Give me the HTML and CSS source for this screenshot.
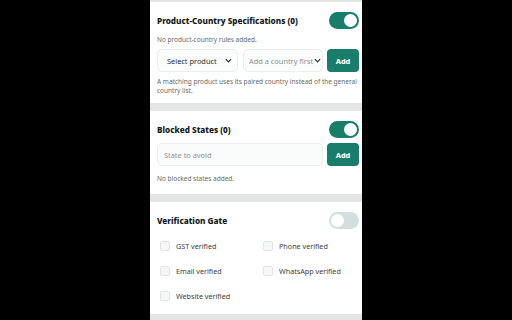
FILE: index.html
```html
<!DOCTYPE html>
<html lang="en">
<head>
    <meta charset="UTF-8">
    <meta name="viewport" content="width=device-width, initial-scale=1.0">
    <title>Store Rules</title>
    <link rel="stylesheet" href="styles.css">
</head>
<body>
    <div class="panel">
        <!-- Product-country pairs -->
        <section class="card card-products">
            <div class="card-head">
                <h3>Product-Country Specifications (0)</h3>
                <span class="toggle on"></span>
            </div>
            <p class="muted note-top">No product-country rules added.</p>
            <div class="field-row">
                <div class="select select-product">
                    <span>Select product</span>
                    <svg class="chevron" viewBox="0 0 8 5"><path d="M1 1l3 3 3-3"/></svg>
                </div>
                <div class="select select-country">
                    <span>Add a country first</span>
                    <svg class="chevron" viewBox="0 0 8 5"><path d="M1 1l3 3 3-3"/></svg>
                </div>
                <button class="btn-add">Add</button>
            </div>
            <p class="muted help">A matching product uses its paired country instead of the general country list.</p>
        </section>

        <!-- Blocked states -->
        <section class="card card-states">
            <div class="card-head">
                <h3>Blocked States (0)</h3>
                <span class="toggle on"></span>
            </div>
            <div class="field-row">
                <input class="text-input" type="text" placeholder="State to avoid">
                <button class="btn-add">Add</button>
            </div>
            <p class="muted note-bottom">No blocked states added.</p>
        </section>

        <!-- Verification -->
        <section class="card card-gate">
            <div class="card-head">
                <h3>Verification Gate</h3>
                <span class="toggle"></span>
            </div>
            <div class="checks">
                <label class="check"><span class="box"></span>GST verified</label>
                <label class="check"><span class="box"></span>Phone verified</label>
                <label class="check"><span class="box"></span>Email verified</label>
                <label class="check"><span class="box"></span>WhatsApp verified</label>
                <label class="check"><span class="box"></span>Website verified</label>
            </div>
        </section>
    </div>
</body>
</html>
```

FILE: styles.css
```css
:root {
    --color-page: #000;
    --color-strip: #e3e6e5; /* gap between cards */
    --color-card: #fff;
    --color-text: #111615;
    --color-muted: #656b6a;
    --color-field: #fafbfb;
    --color-border: #ebeeed;
    --color-primary: #187d6b;
    --color-off: #d3dfdd;
    --font-family: 'Noto Sans', 'Open Sans', sans-serif;
}

* {
    box-sizing: border-box;
    margin: 0;
    padding: 0;
    font-family: var(--font-family);
}

body {
    background: var(--color-page);
    height: 320px;
    overflow: hidden;
}

.panel {
    width: 212px;
    height: 320px;
    margin: 0 auto;
    padding-top: 2px;
    background: var(--color-strip);
    display: flex;
    flex-direction: column;
    gap: 8px;
}

/* Cards */
.card {
    background: var(--color-card);
    padding: 10px 3px 10px 7px;
}

.card-products { height: 101px; padding-bottom: 8px; }
.card-states { height: 83px; }
.card-gate { height: 112px; }

.card-head {
    display: flex;
    align-items: center;
    justify-content: space-between;
    height: 17px;
}

.card-head h3 {
    font-size: 8.2px;
    font-weight: 800;
    color: var(--color-text);
}

/* Toggle switch */
.toggle {
    position: relative;
    width: 30px;
    height: 17px;
    border-radius: 9px;
    background: var(--color-off);
}

.toggle::after {
    content: "";
    position: absolute;
    top: 2px;
    left: 2px;
    width: 13px;
    height: 13px;
    border-radius: 50%;
    background: #fff;
}

.toggle.on {
    background: var(--color-primary);
}

.toggle.on::after {
    left: 15px;
}

/* Text */
.muted {
    font-size: 6.5px;
    line-height: 9px;
    color: var(--color-muted);
}

.note-top { margin: 6px 0 5px; }
.help { margin-top: 5px; }
.note-bottom { margin-top: 8px; }

/* Inputs */
.field-row {
    display: flex;
    gap: 4px;
    height: 23px;
}

.card-states .field-row { margin-top: 5px; }

.select,
.text-input {
    height: 23px;
    background: var(--color-field);
    border: 1px solid var(--color-border);
    border-radius: 5px;
    font-size: 7.4px;
}

.select {
    display: flex;
    align-items: center;
    justify-content: space-between;
    white-space: nowrap;
    overflow: hidden;
    color: #2b2f2e;
}

.select-product {
    width: 81px;
    margin-right: 1px;
    padding: 0 5px 0 9px;
}

.select-country {
    width: 80px;
    padding: 0 1px 0 5px;
    color: #8e9392;
}

.chevron {
    flex: none;
    width: 7px;
    height: 5px;
    fill: none;
    stroke: #333;
    stroke-width: 1.4;
}

.text-input {
    flex: 1;
    padding: 0 6px;
    outline: none;
    color: var(--color-text);
}

.text-input::placeholder {
    color: #8e9392;
}

.btn-add {
    width: 32px;
    height: 23px;
    border: none;
    border-radius: 4px;
    background: var(--color-primary);
    color: #fff;
    font-size: 7.4px;
    font-weight: 800;
}

/* Checkbox grid */
.checks {
    margin-top: 8px;
    display: grid;
    grid-template-columns: 95px 1fr;
    column-gap: 8px;
    row-gap: 8px;
}

.check {
    display: flex;
    align-items: center;
    height: 17px;
    padding-left: 3px;
    font-size: 7.2px;
    color: #3c4140;
}

.box {
    width: 10px;
    height: 10px;
    margin-right: 6px;
    border: 1px solid #e2e4e4;
    border-radius: 2px;
    background: #f6f7f7;
}
```
